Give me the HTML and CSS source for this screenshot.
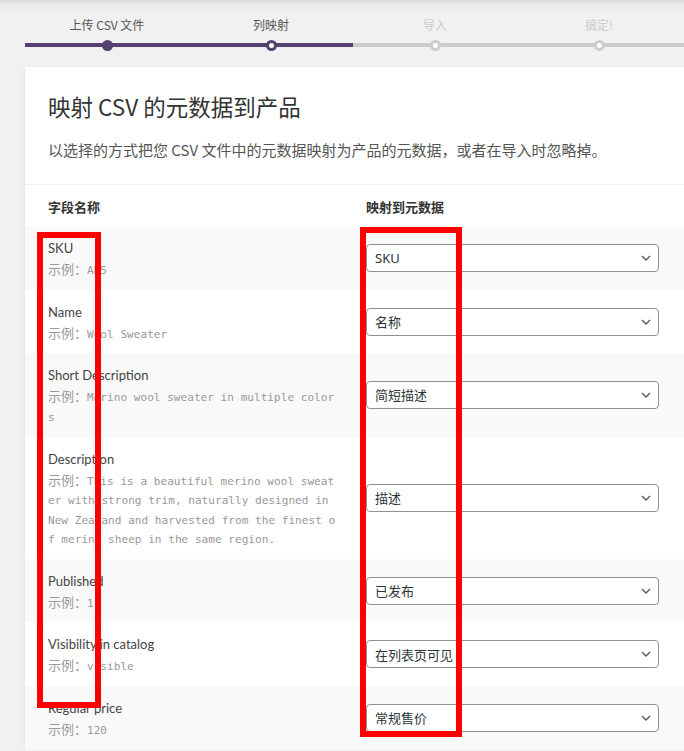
FILE: index.html
```html
<!DOCTYPE html>
<html lang="zh-CN">
<head>
    <meta charset="UTF-8">
    <meta name="viewport" content="width=device-width, initial-scale=1.0">
    <title>产品导入 - 列映射</title>
    <link rel="stylesheet" href="styles.css">
</head>
<body>
    <div class="wrap">
        <ol class="steps">
            <li class="done"><span class="step-label">上传 CSV 文件</span><div class="track"><i class="dot"></i></div></li>
            <li class="active"><span class="step-label">列映射</span><div class="track"><i class="dot"></i></div></li>
            <li><span class="step-label">导入</span><div class="track"><i class="dot"></i></div></li>
            <li><span class="step-label">搞定!</span><div class="track"><i class="dot"></i></div></li>
        </ol>

        <div class="card">
            <header class="card-head">
                <h2>映射 CSV 的元数据到产品</h2>
                <p>以选择的方式把您 CSV 文件中的元数据映射为产品的元数据，或者在导入时忽略掉。</p>
            </header>

            <div class="map-head">
                <span>字段名称</span>
                <span>映射到元数据</span>
            </div>

            <div class="map-body">
                <div class="map-row">
                    <div class="field">
                        <div class="name">SKU</div>
                        <div class="example"><span class="ex-prefix">示例：</span><code>AH5</code></div>
                    </div>
                    <div class="select"><span>SKU</span><svg width="10" height="6" viewBox="0 0 10 6"><polyline points="1,1 5,5 9,1"/></svg></div>
                </div>
                <div class="map-row">
                    <div class="field">
                        <div class="name">Name</div>
                        <div class="example"><span class="ex-prefix">示例：</span><code>Wool Sweater</code></div>
                    </div>
                    <div class="select"><span>名称</span><svg width="10" height="6" viewBox="0 0 10 6"><polyline points="1,1 5,5 9,1"/></svg></div>
                </div>
                <div class="map-row">
                    <div class="field">
                        <div class="name">Short Description</div>
                        <div class="example"><span class="ex-prefix">示例：</span><code>Merino wool sweater in multiple colors</code></div>
                    </div>
                    <div class="select"><span>简短描述</span><svg width="10" height="6" viewBox="0 0 10 6"><polyline points="1,1 5,5 9,1"/></svg></div>
                </div>
                <div class="map-row">
                    <div class="field">
                        <div class="name">Description</div>
                        <div class="example"><span class="ex-prefix">示例：</span><code>This is a beautiful merino wool sweater with strong trim, naturally designed in New Zealand and harvested from the finest of merino sheep in the same region.</code></div>
                    </div>
                    <div class="select"><span>描述</span><svg width="10" height="6" viewBox="0 0 10 6"><polyline points="1,1 5,5 9,1"/></svg></div>
                </div>
                <div class="map-row">
                    <div class="field">
                        <div class="name">Published</div>
                        <div class="example"><span class="ex-prefix">示例：</span><code>1</code></div>
                    </div>
                    <div class="select"><span>已发布</span><svg width="10" height="6" viewBox="0 0 10 6"><polyline points="1,1 5,5 9,1"/></svg></div>
                </div>
                <div class="map-row">
                    <div class="field">
                        <div class="name">Visibility in catalog</div>
                        <div class="example"><span class="ex-prefix">示例：</span><code>visible</code></div>
                    </div>
                    <div class="select"><span>在列表页可见</span><svg width="10" height="6" viewBox="0 0 10 6"><polyline points="1,1 5,5 9,1"/></svg></div>
                </div>
                <div class="map-row">
                    <div class="field">
                        <div class="name">Regular price</div>
                        <div class="example"><span class="ex-prefix">示例：</span><code>120</code></div>
                    </div>
                    <div class="select"><span>常规售价</span><svg width="10" height="6" viewBox="0 0 10 6"><polyline points="1,1 5,5 9,1"/></svg></div>
                </div>
            </div>
        </div>
    </div>

    <!-- annotation boxes drawn over the table -->
    <div class="mark mark-left"></div>
    <div class="mark mark-right"></div>
</body>
</html>
```

FILE: styles.css
```css
body {
    margin: 0;
    font-family: "Noto Sans", "Noto Sans CJK SC", sans-serif;
    color: #444;
    background: linear-gradient(#dcdcdc, #ebebeb 5px, #f1f1f1 14px) no-repeat top / 100% 14px, #f1f1f1;
    overflow: hidden;
}
.wrap {
    padding: 16px 0 0 25px;
}
.steps {
    list-style: none;
    margin: 0 0 20px;
    padding: 0;
    display: flex;
    width: 656px;
}
.steps li {
    flex: 1;
    text-align: center;
}
.step-label {
    display: block;
    font-family: "Noto Sans CJK SC", sans-serif;
    font-size: 12px;
    line-height: 18px;
    color: #ccc;
}
.done .step-label,
.active .step-label {
    color: #555;
}
.track {
    position: relative;
    height: 4px;
    margin-top: 9px;
    background: #ccc;
}
.steps li:last-child .track {
    margin-right: -4px;
}
.done .track,
.active .track {
    background: #54416f;
}
.dot {
    position: absolute;
    left: 50%;
    top: 50%;
    width: 11px;
    height: 11px;
    margin: -5.5px 0 0 -5.5px;
    box-sizing: border-box;
    border: 3px solid #ccc;
    border-radius: 50%;
    background: #fff;
}
.steps li:last-child .dot {
    margin-left: -7.5px;
}
.done .dot {
    background: #54416f;
    border-color: #54416f;
}
.active .dot {
    border-color: #54416f;
}
.card {
    width: 700px;
    background: #fff;
    box-shadow: 0 1px 3px rgba(0, 0, 0, 0.1);
}
.card-head {
    padding: 24px 23px 23px;
}
.card-head h2 {
    margin: 0 0 17px;
    font-family: "Noto Sans CJK SC", sans-serif;
    font-size: 22.5px;
    line-height: 31px;
    font-weight: 400;
    color: #333;
}
.card-head p {
    margin: 0;
    font-family: "Noto Sans CJK SC", sans-serif;
    font-size: 15px;
    line-height: 22px;
    color: #555;
}
.map-head {
    display: grid;
    grid-template-columns: 316px 293px;
    column-gap: 25px;
    border-top: 1px solid #eee;
    padding: 12px 0 10px;
    font-family: "Noto Sans CJK SC", sans-serif;
    font-size: 13px;
    font-weight: 700;
    line-height: 19px;
    color: #333;
}
.map-head span:first-child {
    padding-left: 23px;
}
.map-row {
    display: grid;
    grid-template-columns: 316px 293px;
    column-gap: 25px;
    align-items: center;
}
.map-row:nth-child(odd) {
    background: #f9f9f9;
}
.field {
    padding: 12px 0 11.2px 23px;
    width: 290px;
}
.name {
    font-family: Lato, "Noto Sans", sans-serif;
    font-size: 13px;
    line-height: 20px;
    color: #444;
}
.example {
    margin-top: 1px;
    font-family: "Noto Sans CJK SC", sans-serif;
    font-size: 13px;
    line-height: 19.5px;
    color: #999;
    word-break: break-all;
}
.example code {
    font-family: "DejaVu Sans Mono", "Liberation Mono", monospace;
    font-size: 11.1px;
    line-height: 1;
}
.select {
    display: flex;
    align-items: center;
    justify-content: space-between;
    height: 28px;
    box-sizing: border-box;
    padding: 0 7px 0 8px;
    border: 1px solid #8c8f94;
    border-radius: 4px;
    background: #fff;
    font-family: "Noto Sans", "Noto Sans CJK SC", sans-serif;
    font-size: 13px;
    color: #2c3338;
}
.select svg polyline {
    fill: none;
    stroke: #50575e;
    stroke-width: 1.4;
}
.mark {
    position: absolute;
    box-sizing: border-box;
    border: 6px solid #ff0000;
}
.mark-left {
    left: 37px;
    top: 232px;
    width: 64px;
    height: 476px;
}
.mark-right {
    left: 360px;
    top: 227px;
    width: 102px;
    height: 510px;
}
```
